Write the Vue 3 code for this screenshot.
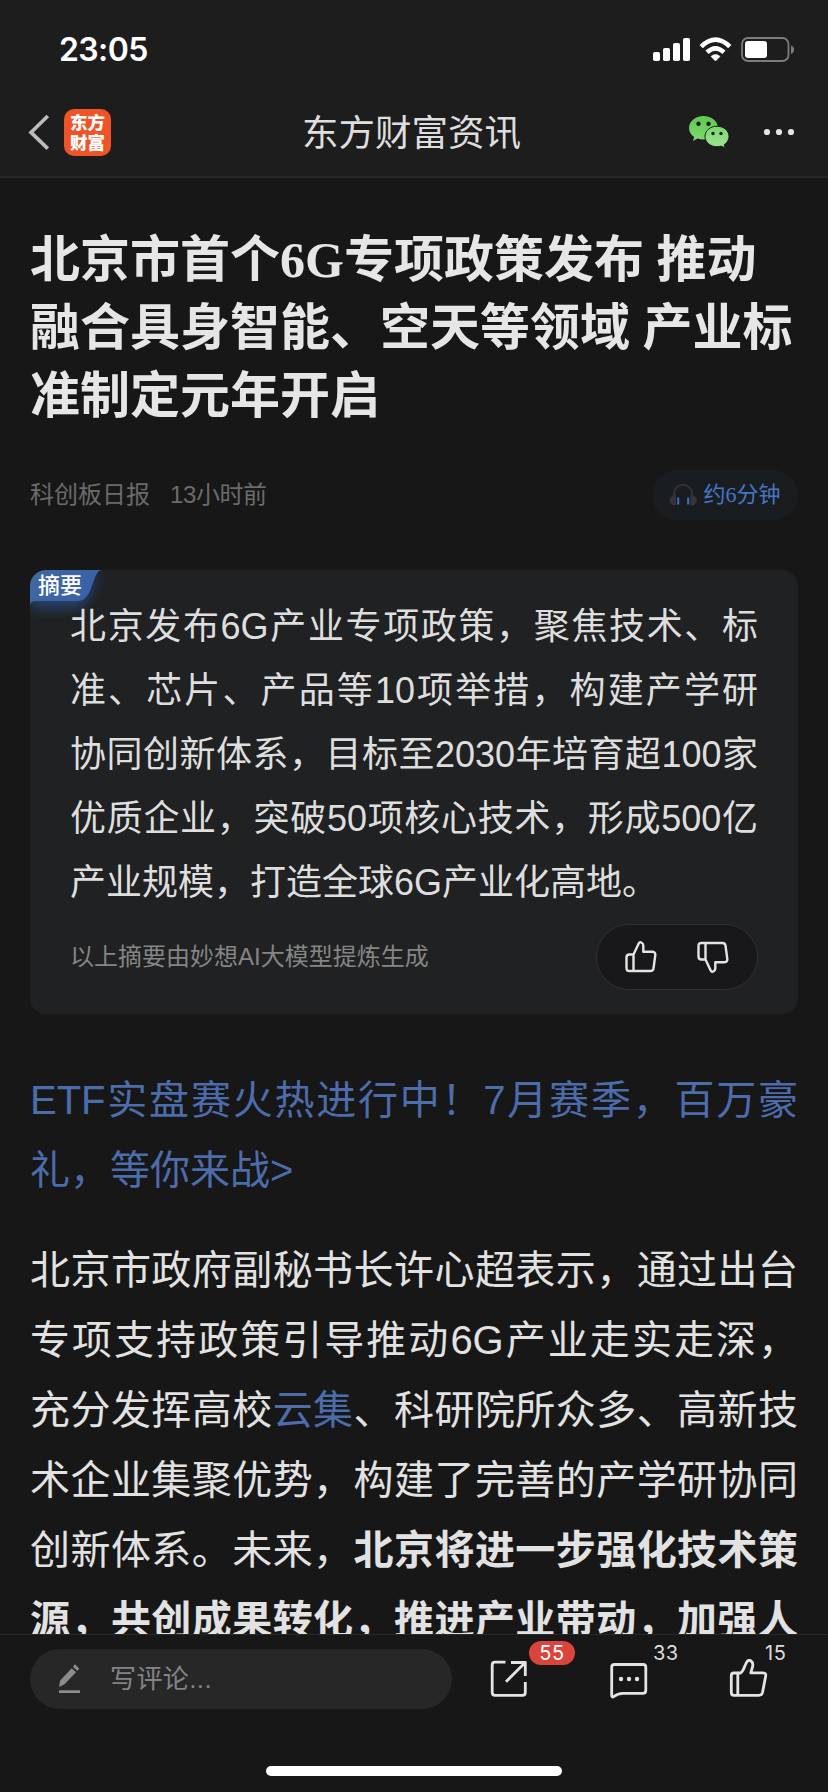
<script setup>
const titleLines = [
  '北京市首个6G专项政策发布 推动',
  '融合具身智能、空天等领域 产业标',
  '准制定元年开启',
]
const summaryLines = [
  '北京发布6G产业专项政策，聚焦技术、标',
  '准、芯片、产品等10项举措，构建产学研',
  '协同创新体系，目标至2030年培育超100家',
  '优质企业，突破50项核心技术，形成500亿',
  '产业规模，打造全球6G产业化高地。',
]
const promoLines = ['ETF实盘赛火热进行中！7月赛季，百万豪', '礼，等你来战>']
const bodyLines = [
  [{ t: '北京市政府副秘书长许心超表示，通过出台' }],
  [{ t: '专项支持政策引导推动6G产业走实走深，' }],
  [{ t: '充分发挥高校' }, { t: '云集', k: 'link' }, { t: '、科研院所众多、高新技' }],
  [{ t: '术企业集聚优势，构建了完善的产学研协同' }],
  [{ t: '创新体系。未来，' }, { t: '北京将进一步强化技术策', k: 'strong' }],
  [{ t: '源，共创成果转化，推进产业带动，加强人', k: 'strong' }],
]
</script>

<template>
  <div class="screen">
    <header class="top">
      <div class="status">
        <span class="time">23:05</span>
        <svg class="status-icons" width="144" height="28" viewBox="652 36 144 28">
          <g fill="#fff">
            <rect x="653" y="52" width="7" height="9" rx="1.8" />
            <rect x="663" y="48" width="7" height="13" rx="1.8" />
            <rect x="673" y="43" width="7" height="18" rx="1.8" />
            <rect x="683" y="38" width="7" height="23" rx="1.8" />
            <path d="M715.5 61 L711 56.4 Q715.5 52.6 720 56.4 Z" stroke="#fff" stroke-width="0.6" />
            <rect x="745" y="41" width="22" height="17" rx="3" />
          </g>
          <g fill="none" stroke="#fff" stroke-width="4.6">
            <path d="M701.2 46.6 Q715.5 32.6 729.8 46.6" />
            <path d="M707 52.3 Q715.5 44.4 724 52.3" />
          </g>
          <rect x="742" y="38" width="46.5" height="23" rx="6" fill="none" stroke="#7c7c7c" stroke-width="1.8" />
          <path d="M791 45.5 Q794 46.5 794 49.5 T791 54 Z" fill="#7c7c7c" />
        </svg>
      </div>
      <nav class="nav">
        <div class="nav-left">
          <svg width="22" height="38" viewBox="28 113 22 38">
            <path d="M47.8 116 L31 132.4 L47.8 148.6" fill="none" stroke="#bdbdbd" stroke-width="3.6" />
          </svg>
          <div class="logo"><span>东方</span><span>财富</span></div>
        </div>
        <h2 class="nav-title">东方财富资讯</h2>
        <div class="nav-right">
          <svg width="42" height="34" viewBox="687 115 42 34">
            <defs>
              <linearGradient id="wx" x1="0" y1="0" x2="0" y2="1">
                <stop offset="0" stop-color="#5fc84f" />
                <stop offset="1" stop-color="#7ed872" />
              </linearGradient>
              <linearGradient id="wx2" x1="0" y1="0" x2="0" y2="1">
                <stop offset="0" stop-color="#7ad66c" />
                <stop offset="1" stop-color="#9fe596" />
              </linearGradient>
            </defs>
            <path d="M702.5 116c-8 0-14.5 5.300-14.500 11.900 0 3.700 2 6.900 5.200 9.100l-1.300 4 4.700-2.400c1.900.6 3.800.9 5.900.9 8 0 14.500-5 14.500-11.600S710.500 116 702.500 116z" fill="url(#wx)" />
            <path d="M716 126.200c-6.700 0-12 4.500-12 10.200s5.300 10.300 12 10.300c1.500 0 3-.2 4.300-.6l3.900 2-1-3.400c2.900-1.900 4.800-4.900 4.800-8.300 0-5.700-5.300-10.200-12-10.200z" fill="url(#wx2)" stroke="#1d1d1d" stroke-width="1" />
            <g fill="#1d1d1d">
              <circle cx="697.500" cy="123.700" r="2.200" /><circle cx="707.500" cy="123.700" r="2.200" />
              <circle cx="712" cy="133.500" r="1.700" /><circle cx="720" cy="133.500" r="1.700" />
            </g>
          </svg>
          <svg width="32" height="8" viewBox="0 0 32 8" fill="#e4e4e4">
            <circle cx="4" cy="4" r="3.100" /><circle cx="16" cy="4" r="3.100" /><circle cx="28" cy="4" r="3.100" />
          </svg>
        </div>
      </nav>
    </header>

    <main class="article">
      <h1 class="title"><span v-for="l in titleLines" :key="l" class="row">{{ l }}</span></h1>

      <div class="meta">
        <div class="source"><span>科创板日报</span><span class="ago">13小时前</span></div>
        <div class="listen">
          <svg width="28" height="24" viewBox="0 0 28 24">
            <path d="M5.200 14V10.500a8.800 8.800 0 0 1 17.600 0V14" fill="none" stroke="#333336" stroke-width="2" />
            <path d="M7 12.500v10H5.500a4.800 4.800 0 0 1 0-10zM21.500 12.500v10H23a4.800 4.800 0 0 0 0-10z" fill="#363436" />
            <path d="M9.200 14.500v7M19.200 14.500v7" stroke="#3f6fc4" stroke-width="2" />
          </svg>
          <span>约6分钟</span>
        </div>
      </div>

      <section class="card">
        <div class="tag">
          <svg width="110" height="60" viewBox="0 0 110 60">
            <defs>
              <linearGradient id="tg" x1="0" y1="0" x2="1" y2="0.400">
                <stop offset="0" stop-color="#44679f" />
                <stop offset="1" stop-color="#3661ab" />
              </linearGradient>
              <filter id="glow" x="-30%" y="-50%" width="160%" height="220%"><feGaussianBlur stdDeviation="7" /></filter>
            </defs>
            <path d="M0 4H74Q66 4 62 16Q57 38 46 38H0Z" fill="#2f5da8" opacity=".6" filter="url(#glow)" />
            <path d="M0 36V12Q0 0 12 0H71Q67 1 64 10L60 21Q56 31 47 31H6Q0 31 0 36Z" fill="url(#tg)" />
          </svg>
          <span>摘要</span>
        </div>
        <p class="summary"><span v-for="l in summaryLines" :key="l" class="row">{{ l }}</span></p>
        <div class="card-foot">
          <span class="note">以上摘要由妙想AI大模型提炼生成</span>
          <div class="votes">
            <svg width="34" height="34" viewBox="0 0 34 34">
              <path d="M9.500 14.500L14.700 3.600Q15.500 1.700 17.300 2.500Q19.300 3.400 19.300 5.500V11.800H28.500Q31.700 12 31.300 15L29.500 28.500Q29 31 26.500 31H5.500Q2.500 31 2.500 28V17.500Q2.500 14.500 5.500 14.500ZM9.500 14.500V31" />
            </svg>
            <svg width="34" height="34" viewBox="0 0 34 34">
              <path d="M9.500 19.500L14.700 30.400Q15.500 32.300 17.300 31.500Q19.300 30.600 19.300 28.500V22.200H28.500Q31.700 22 31.300 19L29.500 5.500Q29 3 26.500 3H5.500Q2.500 3 2.500 6V16.500Q2.500 19.500 5.500 19.500ZM9.500 19.500V3" />
            </svg>
          </div>
        </div>
      </section>

      <p class="text promo"><span v-for="l in promoLines" :key="l" class="row">{{ l }}</span></p>
      <p class="text body">
        <span v-for="(l, i) in bodyLines" :key="i" class="row"><span v-for="s in l" :key="s.t" :class="s.k">{{ s.t }}</span></span>
      </p>
    </main>

    <footer class="bar">
      <div class="tools">
        <div class="input">
          <svg width="24" height="32" viewBox="0 0 24 32" fill="#8c8c8f">
            <path d="M1 23.500L2.200 17.500L13.700 5.200L18 9.300L6.500 21.200L1.500 23.800Z" />
            <path d="M15 3.800L17 1.300L21.200 5.500L19.300 7.900Z" />
            <rect x="1" y="27.300" width="21" height="2.700" />
          </svg>
          <span class="hint">写评论...</span>
        </div>
        <div class="action">
          <svg width="40" height="40" viewBox="0 0 40 40">
            <path d="M16.500 3.200H6Q3.200 3.200 3.200 6V33.500Q3.200 36.300 6 36.300H33.500Q36.300 36.300 36.300 33.500V23M22 3.500H36.300V17M35.500 4.300L17 22.800" />
          </svg>
          <span class="badge">55</span>
        </div>
        <div class="action">
          <svg width="40" height="40" viewBox="0 0 40 40">
            <path d="M5.500 5.500H34Q36.800 5.500 36.800 8.300V31.500Q36.800 34.300 34 34.300H14Q8.500 34.500 5 37.500Q2.700 39 2.700 36V8.300Q2.700 5.500 5.500 5.500Z" />
            <g class="dots"><circle cx="12" cy="20" r="2.200" /><circle cx="20" cy="20" r="2.200" /><circle cx="28" cy="20" r="2.200" /></g>
          </svg>
          <span class="count">33</span>
        </div>
        <div class="action">
          <svg width="40" height="40" viewBox="0 0 40 40">
            <path d="M11.500 14Q14 12.500 15.800 7L17.500 3.500Q19.200 0 22 2Q24.700 4 23.500 8L21.800 13.800H34Q37.300 14 36.700 17L33.500 33.500Q32.800 36.300 30 36.300H5Q2.300 36.300 2.300 33.500V16.700Q2.300 14 5 14ZM8.800 14V36.300" />
          </svg>
          <span class="count">15</span>
        </div>
      </div>
      <div class="home"></div>
    </footer>
  </div>
</template>

<style>
body { background: #171717; }
</style>

<style scoped>
.screen {
  width: 828px; height: 1792px; overflow: hidden;
  display: flex; flex-direction: column;
  background: #171717; color: #e2e2e2;
  font-family: "Liberation Sans", "Noto Sans CJK SC", sans-serif;
}
.screen svg { display: block; flex: none; }
.top { height: 176px; background: #1d1d1d; border-bottom: 2px solid #282828; flex: none; }
.status { height: 100px; padding: 0 32px 0 59px; display: flex; justify-content: space-between; align-items: center; }
.time { font: 600 32px/40px Inter, sans-serif; letter-spacing: -0.6px; color: #fff; }
.nav { height: 64px; padding: 0 33px 0 28px; display: grid; grid-template-columns: 1fr auto 1fr; align-items: center; }
.nav-left { display: flex; align-items: center; gap: 14px; }
.logo {
  width: 47px; height: 47px; border-radius: 10px; background: #ee5427; color: #fff;
  display: flex; flex-direction: column; align-items: center; justify-content: center;
  font: 900 17.500px/20px "Noto Sans CJK SC", sans-serif;
}
.nav-title { margin: 0; padding-top: 3px; font-weight: 400; font-size: 36.500px; line-height: 50px; color: #dedede; }
.nav-right { display: flex; justify-content: flex-end; align-items: center; gap: 33px; }

.article { flex: 1; min-height: 0; overflow: hidden; padding: 48px 30px 0; }
.row { display: block; white-space: nowrap; }
.title {
  margin: 0; font: 700 50px/68px "Liberation Serif", "Noto Sans CJK SC", serif; color: #e6e6e6;
}
.meta { margin-top: 40px; height: 50px; display: flex; justify-content: space-between; align-items: center; }
.source { display: flex; gap: 20px; padding-bottom: 5px; font-size: 24px; color: #6b6b6b; }
.ago { letter-spacing: -0.4px; }
.listen {
  width: 146px; height: 50px; border-radius: 25px; background: #191d20;
  display: flex; align-items: center; justify-content: center; gap: 6px; box-sizing: border-box;
  font: 22px/30px "Liberation Serif", "Noto Sans CJK SC", serif; color: #4576c8;
}
.card {
  position: relative; margin-top: 50px; height: 444px; box-sizing: border-box; padding: 25px 40px 0;
  border-radius: 16px; background: #202122; overflow: hidden;
}
.tag { position: absolute; left: 0; top: 0; }
.tag span { position: absolute; left: 8px; top: 0; font-size: 22px; line-height: 31px; font-weight: 500; color: #fff; white-space: nowrap; }
.summary { position: relative; margin: 0; font-size: 36px; line-height: 64px; color: #dedede; }
.summary .row, .body .row, .promo .row { text-align: justify; text-align-last: justify; }
.summary .row:last-child, .promo .row:last-child { text-align-last: left; }
.card-foot { margin-top: 9px; height: 66px; display: flex; align-items: center; justify-content: space-between; font-size: 24px; color: #858585; }
.note { padding-bottom: 5px; }
.votes {
  width: 162px; height: 66px; box-sizing: border-box; border: 1px solid #303032; border-radius: 33px; background: #18181a;
  display: flex; align-items: center; justify-content: center; gap: 38px;
}
.votes path, .action path { fill: none; stroke: #e4e4e4; stroke-width: 2.400; stroke-linejoin: round; }
.action path { stroke-width: 2.800; }
.text { margin: 0; font-size: 40px; line-height: 70px; }
.promo { margin-top: 51px; color: #4c6cab; }
.body { margin-top: 30px; color: #e2e2e2; }
.link { color: #4c6cab; }
.strong { font-weight: 700; }

.bar { position: relative; flex: none; height: 157px; border-top: 1px solid #282828; background: #171717; display: flex; flex-direction: column; align-items: center; }
.tools { width: 828px; box-sizing: border-box; padding: 14px 0 0 30px; display: flex; align-items: center; }
.input {
  width: 422px; height: 60px; box-sizing: border-box; border-radius: 30px; background: #272727; padding-left: 28px; margin-right: 37px;
  display: flex; align-items: center; gap: 28px; font-size: 26px; letter-spacing: 0.400px; color: #838387; flex: none;
}
.hint { padding-bottom: 5px; }
.action { position: relative; width: 40px; height: 40px; margin-right: 80px; flex: none; }
.action:last-child { margin-right: 0; }
.badge, .count { position: absolute; font: 400 20px/24px Inter, sans-serif; letter-spacing: 0.500px; color: #dedede; top: -18px; }
.badge { left: 40px; width: 46px; text-align: center; border-radius: 12px; background: #d9453d; color: #fff; }
.count { left: 44px; }
.action:last-child .count { left: 36px; }
.action .dots { fill: #e4e4e4; }
.home { margin-top: 57px; width: 296px; height: 10px; border-radius: 5px; background: #fff; }
</style>
